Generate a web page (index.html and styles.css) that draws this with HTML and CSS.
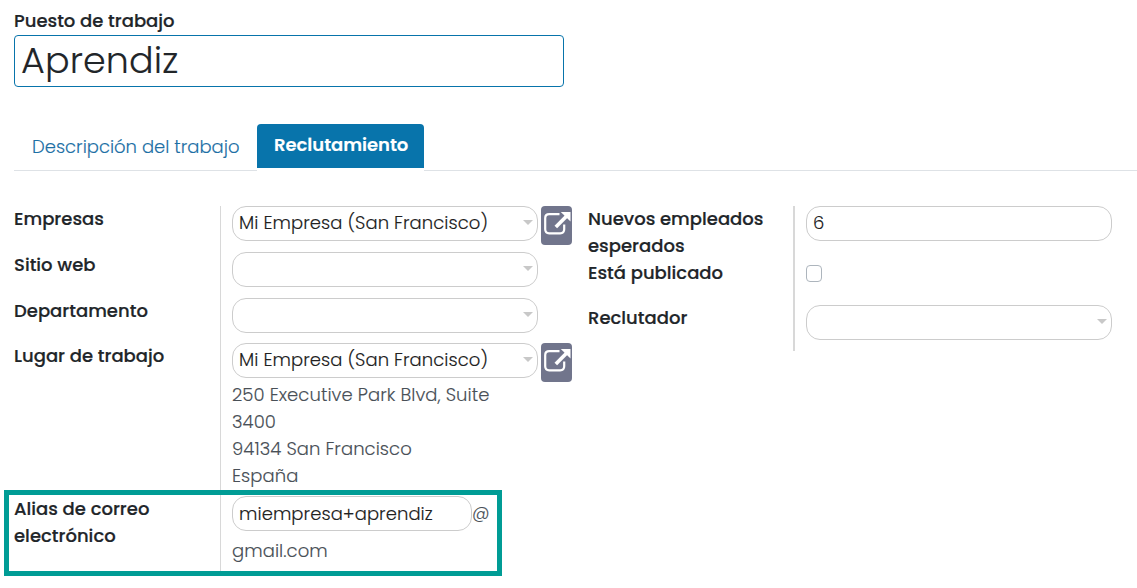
FILE: index.html
```html
<!DOCTYPE html>
<html lang="es">
<head>
<meta charset="utf-8">
<title>Puesto de trabajo</title>
<link rel="stylesheet" href="styles.css">
</head>
<body>
<main class="page">
  <div class="title-label">Puesto de trabajo</div>
  <div class="title-input">Aprendiz</div>
  <nav class="tabs">
    <a class="tab">Descripción del trabajo</a>
    <a class="tab active">Reclutamiento</a>
  </nav>
  <div class="columns">
    <section class="group left">
      <div class="row r46"><div class="label">Empresas</div><div class="value"><div class="field select">Mi Empresa (San Francisco)</div><button class="ext"><svg viewBox="0 0 31 39"><path d="M18.5 8.2H8.2Q4.2 8.2 4.2 12.2V23.3Q4.2 27.3 8.2 27.3H19.2Q23.2 27.3 23.2 23.3V18.5" fill="none" stroke="#fff" stroke-width="2.2"/><path d="M14.8 21L25.5 10.3" stroke="#fff" stroke-width="3.7"/><path d="M19.8 6H29.5V15.5Z" fill="#fff"/></svg></button></div></div>
      <div class="row r46"><div class="label">Sitio web</div><div class="value"><div class="field select"></div></div></div>
      <div class="row r45"><div class="label">Departamento</div><div class="value"><div class="field select"></div></div></div>
      <div class="row r152"><div class="label">Lugar de trabajo</div><div class="value stack">
        <div class="line"><div class="field select">Mi Empresa (San Francisco)</div><button class="ext"><svg viewBox="0 0 31 39"><path d="M18.5 8.2H8.2Q4.2 8.2 4.2 12.2V23.3Q4.2 27.3 8.2 27.3H19.2Q23.2 27.3 23.2 23.3V18.5" fill="none" stroke="#fff" stroke-width="2.2"/><path d="M14.8 21L25.5 10.3" stroke="#fff" stroke-width="3.7"/><path d="M19.8 6H29.5V15.5Z" fill="#fff"/></svg></button></div>
        <div class="address">250 Executive Park Blvd, Suite<br>3400<br>94134 San Francisco<br>España</div>
      </div></div>
      <div class="row last"><div class="label">Alias de correo<br>electrónico</div><div class="value stack">
        <div class="line"><div class="field alias">miempresa+aprendiz</div><span class="at">@</span></div>
        <div class="domain">gmail.com</div>
      </div></div>
    </section>
    <section class="group right">
      <div class="row r54"><div class="label">Nuevos empleados<br>esperados</div><div class="value"><div class="field">6</div></div></div>
      <div class="row r45"><div class="label">Está publicado</div><div class="value"><div class="check"></div></div></div>
      <div class="row r46"><div class="label">Reclutador</div><div class="value"><div class="field select"></div></div></div>
    </section>
  </div>
  <div class="highlight"></div>
</main>
</body>
</html>
```
FILE: styles.css
```css
* { box-sizing: border-box; }
body { margin: 0; background: #fff; color: #495057; font: 300 18px/27px Poppins, Inter, sans-serif; letter-spacing: .06px; -webkit-text-stroke-width: .12px; }
.page { position: relative; width: 1137px; height: 588px; padding: 7px 0 0 14px; overflow: hidden; white-space: nowrap; }
.title-label, .label { color: #212529; font-weight: 500; letter-spacing: .01px; -webkit-text-stroke-width: .18px; }
.title-label { height: 28px; }
.title-input { width: 550px; height: 52px; padding: 0 6px; border: 1px solid #0874ab; border-radius: 4px; color: #212529; font-size: 36.5px; line-height: 50px; letter-spacing: .1px; }
.tabs { display: flex; height: 84px; padding-top: 37px; border-bottom: 1px solid #dee2e6; letter-spacing: 0; }
.tab { width: 243px; height: 46px; padding: 9px 0 0 18px; color: #1d70a5; }
.tab.active { width: 167px; height: 47px; padding: 7px 0 0 17px; border-bottom: 3px solid #fff; border-radius: 4px 4px 0 0; background: #0874ab; background-clip: padding-box; color: #fff; font-weight: 600; letter-spacing: -.05px; }
.columns { display: flex; padding-top: 35px; }
.left { width: 574px; }
.row { display: flex; }
.label { width: 206px; flex: none; margin-top: -1px; }
.right .label { width: 205px; }
.value { display: flex; align-items: flex-start; padding-left: 11px; border-left: 1px solid #d8d8d8; }
.right .value { border-left-width: 2px; }
.stack { display: block; }
.line { display: flex; align-items: flex-start; }
.r46 { height: 46px; }
.r45 { height: 45px; }
.r54 { height: 54px; }
.r152 { height: 152px; }
.last { height: 77px; }
.last .label { padding-top: 1px; }
.last .value { padding-top: 1px; }
.field { position: relative; width: 306px; height: 35px; padding: 0 6px; border: 1px solid #ccc; border-radius: 14px; color: #212121; line-height: 32px; }
.select::after { content: ""; position: absolute; right: 4px; top: 13px; border: solid transparent; border-width: 5px 5.5px 0; border-top-color: #c8c8c8; }
.ext { width: 31px; height: 39px; margin: 0 0 0 3px; padding: 0; border: 0; border-radius: 4px; background: #71758c; }
.ext svg { display: block; width: 31px; height: 39px; }
.address { margin-top: 3px; height: 108px; }
.line .ext { margin-bottom: -4px; }
.alias { width: 240px; line-height: 33px; }
.at { line-height: 35px; font-size: 17.5px; }
.domain { padding-top: 6px; }
.check { width: 16px; height: 17px; margin-top: 5px; border: 1px solid #adb5bd; border-radius: 4px; }
.highlight { position: absolute; left: 4px; top: 490px; width: 498px; height: 86px; border: 5px solid #009c95; }
```
